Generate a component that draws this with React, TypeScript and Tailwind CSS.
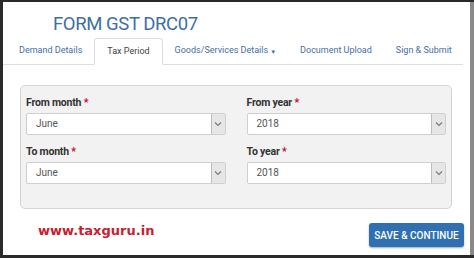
import React from 'react';

const tabs = ['Demand Details', 'Tax Period', 'Goods/Services Details', 'Document Upload', 'Sign & Submit'];

const Chevron = () => (
  <svg width="8" height="6" viewBox="0 0 8 6" fill="none">
    <path d="M1 1.5 L4 4.5 L7 1.5" stroke="#777" strokeWidth="1.1" />
  </svg>
);

const Field = ({ label, value }: { label: string; value: string }) => (
  <div className="flex flex-col">
    <div className="text-[10.5px] font-bold text-[#333] leading-[14px] tracking-[-0.2px]">
      {label} <span className="text-[#d0021b]">*</span>
    </div>
    <div className="mt-[3px] flex h-[22px] border border-[#cfcfcf] bg-white rounded-[2px]">
      <div className="flex-1 pl-[9px] text-[10px] text-[#555] leading-[20px]">{value}</div>
      <div className="w-[14px] flex items-center justify-center bg-[#e6e6e6] border-l border-[#bdbdbd]">
        <Chevron />
      </div>
    </div>
  </div>
);

const App = () => {
  return (
    <div className="w-[474px] h-[258px] bg-[#2a2a2a] pt-[2px] pl-[3px] pb-[3px] overflow-hidden" style={{ fontFamily: 'Roboto, sans-serif' }}>
      <div className="h-full bg-white border-r-[4px] border-[#8a8a8a] flex flex-col">
        <div className="pl-[50px] pt-[11px] text-[18.5px] leading-[22px] tracking-[-0.4px] text-[#3d6ea5]">FORM GST DRC07</div>

        <div className="mt-[3px] mr-[7px] flex border-b border-[#dedede] pl-[4px] h-[27px]">
          {tabs.map((t) => (
            <div
              key={t}
              className={
                t === 'Tax Period'
                  ? 'px-[12px] whitespace-nowrap flex items-center text-[9px] text-[#444] bg-white border border-[#dedede] border-b-white rounded-t-[3px] -mb-px'
                  : 'px-[12px] whitespace-nowrap flex items-center text-[9px] text-[#3f6fa3]'
              }
            >
              {t}
              {t === 'Goods/Services Details' && <span className="ml-[2px] text-[6px]">▼</span>}
            </div>
          ))}
        </div>

        <div className="mt-[20px] ml-[17px] w-[432px] h-[124px] bg-[#f2f2f2] border border-[#d4d4d4] rounded-[5px] px-[5px] pt-[10px]">
          <div className="grid grid-cols-2 gap-x-[21px] gap-y-[10px]">
            <Field label="From month" value="June" />
            <Field label="From year" value="2018" />
            <Field label="To month" value="June" />
            <Field label="To year" value="2018" />
          </div>
        </div>

        <div className="mt-[12px] flex items-start justify-between pl-[35px] pr-[6px]">
          <div className="text-[13px] font-bold text-[#c8202f] leading-[20px]" style={{ fontFamily: '"DejaVu Sans", sans-serif' }}>
            www.taxguru.in
          </div>
          <button className="mt-[2px] w-[95px] h-[24px] bg-[#2f70b2] text-white text-[10px] font-medium rounded-[3px] shadow-[0_1px_2px_rgba(0,0,0,0.35)]">
            SAVE &amp; CONTINUE
          </button>
        </div>
      </div>
    </div>
  );
};

export default App;
